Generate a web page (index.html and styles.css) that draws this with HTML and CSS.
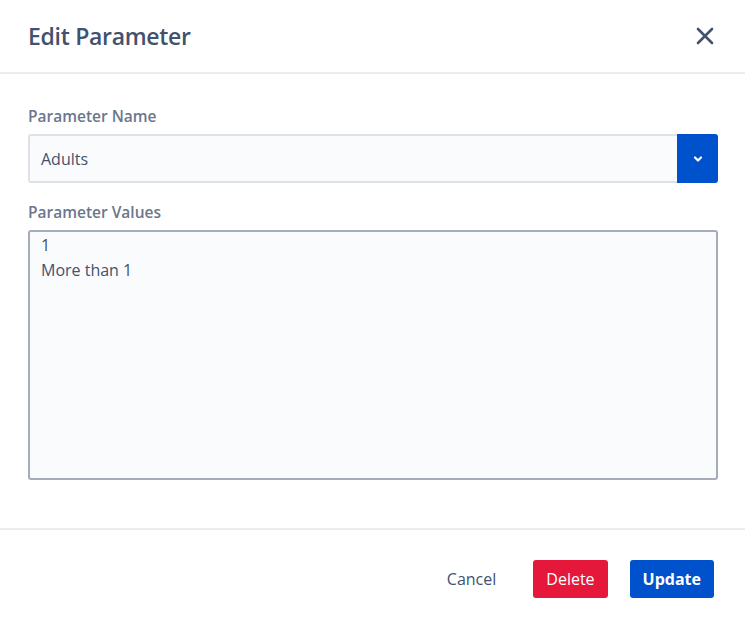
FILE: index.html
```html
<!DOCTYPE html>
<html lang="en">

<head>
    <meta charset="UTF-8">
    <meta name="viewport" content="width=device-width, initial-scale=1.0">
    <title>Edit Parameter</title>
    <link rel="stylesheet" href="styles.css">
</head>

<body>
    <div class="modal">
        <div class="modal-header">
            <h2 class="modal-title">Edit Parameter</h2>
            <button class="close-btn" aria-label="Close">
                <svg width="18" height="18" viewBox="0 0 18 18">
                    <path d="M2 2 L16 16 M16 2 L2 16" stroke="#42526e" stroke-width="2.6" stroke-linecap="round" fill="none" />
                </svg>
            </button>
        </div>

        <div class="modal-body">
            <label class="field-label">Parameter Name</label>
            <div class="select-row">
                <div class="select-value">Adults</div>
                <button class="select-toggle" aria-label="Open">
                    <svg width="10" height="8" viewBox="0 0 10 8">
                        <path d="M2 2.5 L5 5.5 L8 2.5" stroke="#fff" stroke-width="2.2" stroke-linecap="round" stroke-linejoin="round" fill="none" />
                    </svg>
                </button>
            </div>

            <label class="field-label">Parameter Values</label>
            <div class="values-box">
                <div>1</div>
                <div>More than 1</div>
            </div>
        </div>

        <div class="modal-footer">
            <button class="btn btn-link">Cancel</button>
            <button class="btn btn-danger">Delete</button>
            <button class="btn btn-primary">Update</button>
        </div>
    </div>
</body>

</html>
```

FILE: styles.css
```css
body {
    margin: 0;
    padding: 0;
    background-color: #fff;
    font-family: "Open Sans", Lato, sans-serif;
    color: #172b4d;
}

.modal {
    width: 745px;
    height: 623px;
    display: flex;
    flex-direction: column;
}

.modal-header {
    height: 72px;
    display: flex;
    align-items: center;
    justify-content: space-between;
    padding: 0 31px 0 28px;
    border-bottom: 2px solid #ebecf0;
}

.modal-title {
    margin: 0;
    font-size: 23px;
    font-weight: 600;
    letter-spacing: -0.3px;
    color: #42526e;
}

.close-btn {
    border: none;
    background: none;
    padding: 0;
    display: flex;
}

.modal-body {
    padding: 32px 27px 48px 28px;
    border-bottom: 2px solid #ebecf0;
}

.field-label {
    display: block;
    font-size: 15.5px;
    line-height: 20px;
    font-weight: 600;
    color: #6b778c;
    margin-bottom: 8px;
}

.select-row {
    display: flex;
    height: 49px;
    margin-bottom: 19px;
}

.select-value {
    flex: 1;
    display: flex;
    align-items: center;
    padding-left: 11px;
    background: #fafbfc;
    border: 2px solid #dfe1e6;
    border-right: none;
    border-radius: 3px 0 0 3px;
    font-size: 16px;
    color: #42526e;
}

.select-toggle {
    width: 41px;
    border: none;
    background: #0052cc;
    border-radius: 0 3px 3px 0;
    display: flex;
    align-items: center;
    justify-content: center;
    padding: 0;
}

.values-box {
    box-sizing: border-box;
    height: 250px;
    padding: 1px 11px 5px;
    background: #fafbfc;
    border: 2px solid #a5adba;
    border-radius: 3px;
    font-size: 16px;
    line-height: 25px;
    color: #42526e;
}

.modal-footer {
    display: flex;
    justify-content: flex-end;
    align-items: center;
    padding: 30px 31px 0 0;
}

.btn {
    height: 38px;
    border: none;
    border-radius: 3px;
    font-family: inherit;
    font-size: 16px;
    padding: 0 13px;
}

.btn-link {
    background: none;
    color: #42526e;
    margin-right: 24px;
}

.btn-danger {
    background: #e5173a;
    color: #fff;
    margin-right: 22px;
}

.btn-primary {
    background: #0052cc;
    color: #fff;
    font-weight: 700;
}
```
